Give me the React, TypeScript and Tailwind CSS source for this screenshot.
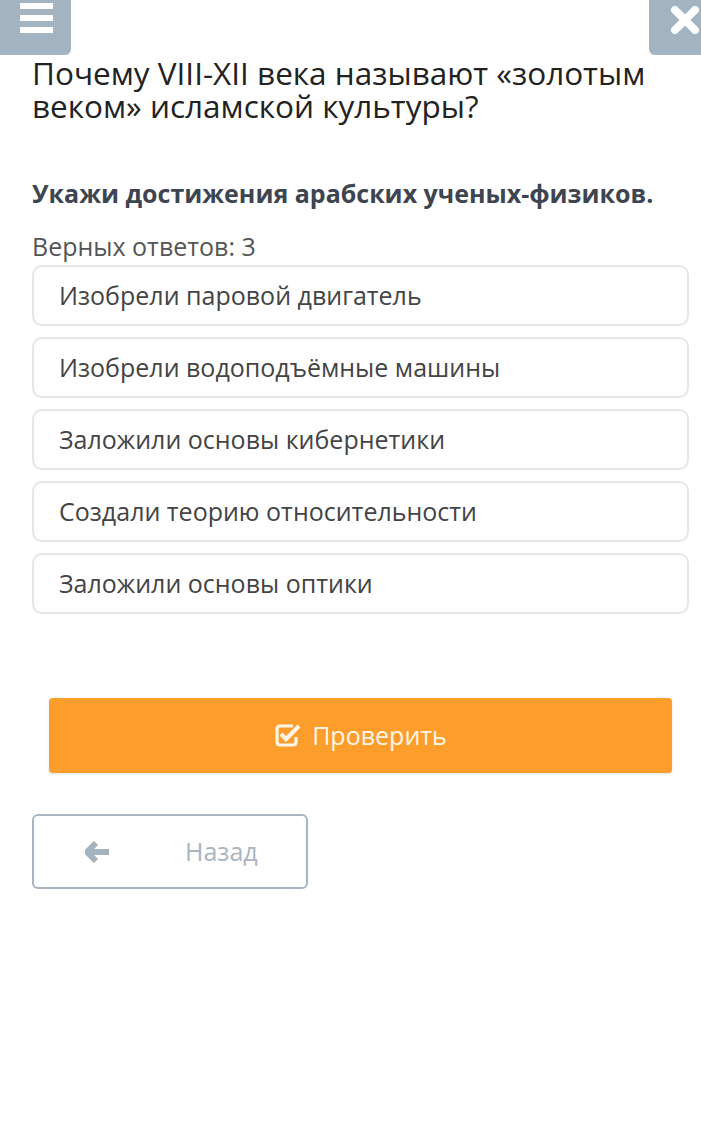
const options = [
  "Изобрели паровой двигатель",
  "Изобрели водоподъёмные машины",
  "Заложили основы кибернетики",
  "Создали теорию относительности",
  "Заложили основы оптики",
];

export default function App() {
  return (
    <div className="min-h-[1124px] w-[701px] bg-white font-['Open_Sans',sans-serif]">
      <div className="flex h-[55px] justify-between">
        <button className="flex w-[71px] flex-col items-center justify-start gap-[6px] rounded-br-md bg-[#a3b3c0] pt-[3px] pl-[2px]">
          <span className="h-[6px] w-[33px] bg-white" />
          <span className="h-[6px] w-[33px] bg-white" />
          <span className="h-[6px] w-[33px] bg-white" />
        </button>
        <button className="flex w-[52px] items-start justify-end rounded-bl-md bg-[#a3b3c0] pt-[6px] pr-[1px]">
          <svg width="30" height="28" viewBox="0 0 30 28">
            <path d="M5 4 L25 24 M25 4 L5 24" stroke="white" strokeWidth="8" strokeLinecap="round" />
          </svg>
        </button>
      </div>

      <div className="pl-[32px] pr-[12px]">
        <h1 className="mt-[1px] text-[31.5px] leading-[33px] text-[#222]">
          <span className="block">Почему VIII-XII века называют «золотым</span>
          <span className="block">веком» исламской культуры?</span>
        </h1>
        <p className="mt-[56px] text-[25px] font-bold leading-[30px] text-[#3d4550]">
          Укажи достижения арабских ученых-физиков.
        </p>
        <p className="mt-[23px] text-[25px] leading-[30px] text-[#555]">Верных ответов: 3</p>

        <div className="mt-[4px] flex flex-col gap-[11px]">
          {options.map((o) => (
            <div
              key={o}
              className="flex h-[61px] items-center rounded-[10px] border-2 border-[#e6e6e6] px-[25px] text-[25px] text-[#444]"
            >
              {o}
            </div>
          ))}
        </div>

        <div className="mt-[84px] pl-[17px] pr-[17px]">
          <button className="flex h-[75px] w-full items-center justify-center gap-[10px] rounded-[4px] bg-[#fd9d2c] text-[25px] text-[#fff5e6] shadow-sm">
            <svg width="28" height="26" viewBox="0 0 28 26" className="-mt-[2px]">
              <path
                d="M19 4 H6 Q3 4 3 7 V20 Q3 23 6 23 H19 Q22 23 22 20 V15"
                stroke="#fff5e6"
                strokeWidth="3.2"
                fill="none"
              />
              <path d="M7 12 L12 17 L25 4" stroke="#fff5e6" strokeWidth="4.2" fill="none" />
            </svg>
            Проверить
          </button>
        </div>

        <button className="mt-[41px] flex h-[75px] w-[276px] items-center rounded-[6px] border-2 border-[#a9b5c1] text-[25px] text-[#a9b5c1]">
          <svg width="26" height="22" viewBox="0 0 26 22" className="ml-[51px]">
            <path d="M11 2 L2 11 L11 20 M3 11 H24" stroke="#a3b3c0" strokeWidth="6" fill="none" strokeLinejoin="round" />
          </svg>
          <span className="ml-[74px]">Назад</span>
        </button>
      </div>
    </div>
  );
}
